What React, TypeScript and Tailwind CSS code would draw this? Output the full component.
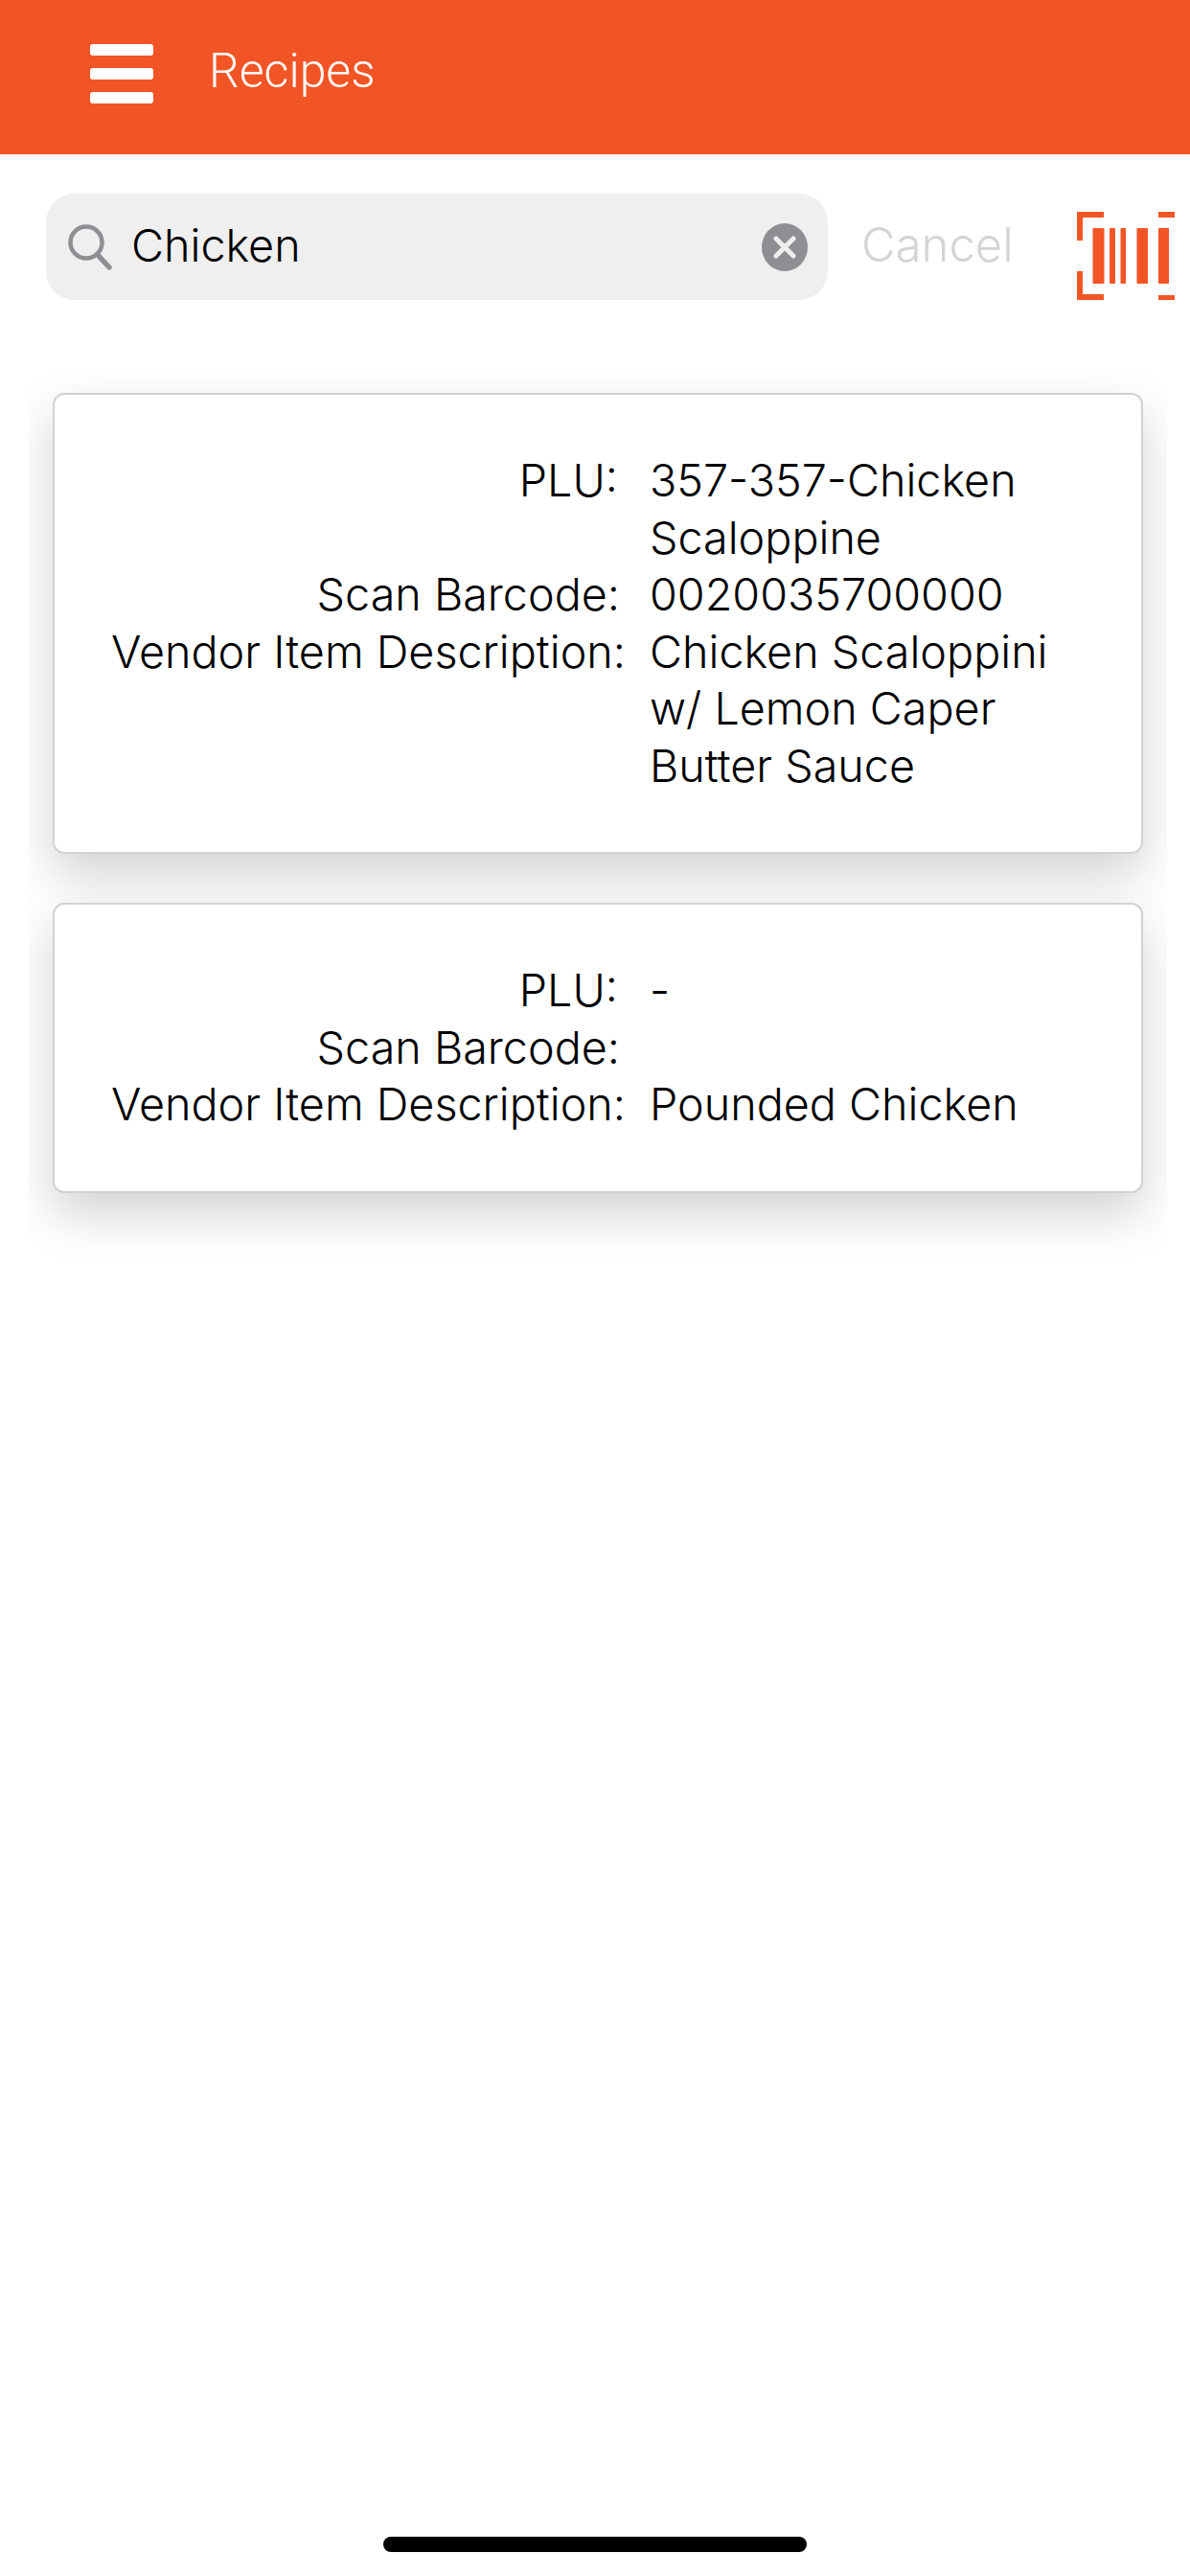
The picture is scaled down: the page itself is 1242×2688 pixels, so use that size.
const rows1 = [
  { label: "PLU:", pad: "pr-[8px]", value: "357-357-Chicken Scaloppine" },
  { label: "Scan Barcode:", pad: "pr-[6px]", value: "0020035700000" },
  { label: "Vendor Item Description:", pad: "pr-0", value: "Chicken Scaloppini w/ Lemon Caper Butter Sauce" },
];

const rows2 = [
  { label: "PLU:", pad: "pr-[8px]", value: "-" },
  { label: "Scan Barcode:", pad: "pr-[6px]", value: "" },
  { label: "Vendor Item Description:", pad: "pr-0", value: "Pounded Chicken" },
];

function BarcodeIcon() {
  return (
    <svg width="102" height="92" viewBox="0 0 102 92" fill="#f25525" className="shrink-0">
      <path d="M0 0h28v6H6v24H0zM0 62h6v24h22v6H0zM85 0h17v6H85zM85 87h17v5H85z" />
      <rect x="16.500" y="17" width="12" height="58" rx="1" />
      <rect x="34" y="17" width="6" height="58" rx="1" />
      <rect x="45.500" y="17" width="5.500" height="58" rx="1" />
      <rect x="62.500" y="17" width="11.500" height="58" rx="1" />
      <rect x="85" y="17" width="11" height="58" rx="1" />
    </svg>
  );
}

function ResultCard({ rows }: { rows: { label: string; pad: string; value: string }[] }) {
  return (
    <div className="rounded-[12px] border-2 border-[#d2d2d2] bg-white py-[60px] pl-[58px] pr-[80px] shadow-[0_22px_52px_rgba(0,0,0,0.18)]">
      <div className="grid grid-cols-[538px_1fr] gap-x-[25px] text-[46.700px] font-[360] leading-[59.5px] text-black">
        {rows.map((row) => (
          <div key={row.label} className="contents">
            <div className={`whitespace-nowrap text-right ${row.pad}`}>{row.label}</div>
            <div className="min-h-[59.5px]">{row.value}</div>
          </div>
        ))}
      </div>
    </div>
  );
}

export default function App() {
  return (
    <div className="flex h-[2688px] w-[1242px] flex-col bg-white font-['Inter',sans-serif]">
      <header className="flex h-[161px] items-start bg-[#f25525] pl-[94px]">
        <div className="mt-[46px] flex w-[66px] flex-col gap-[13px]">
          <div className="h-[12px] rounded-[3px] bg-white" />
          <div className="h-[12px] rounded-[3px] bg-white" />
          <div className="h-[12px] rounded-[3px] bg-white" />
        </div>
        <span className="ml-[58px] mt-[43px] font-['Roboto',sans-serif] text-[50px] font-light leading-[62px] text-white">Recipes</span>
      </header>

      <div className="mt-[41px] flex items-center pl-[48px]">
        <div className="flex h-[111px] w-[816px] items-center rounded-[30px] bg-[#efefef] pl-[23px] pr-[21px]">
          <svg width="46" height="48" viewBox="0 0 46 48" fill="none" stroke="#8e8e93" className="shrink-0">
            <circle cx="19" cy="19" r="16.500" strokeWidth="4.500" />
            <path d="M31 32l12 13" strokeWidth="5.500" strokeLinecap="round" />
          </svg>
          <span className="mb-[2px] ml-[20px] text-[46.700px] font-[360] text-black">Chicken</span>
          <svg width="48" height="50" viewBox="0 0 48 50" className="ml-auto shrink-0">
            <ellipse cx="24" cy="25" rx="24" ry="25" fill="#8e8e93" />
            <path d="M15 16l18 18M33 16L15 34" stroke="#efefef" strokeWidth="5" strokeLinecap="round" />
          </svg>
        </div>
        <span className="mb-[3px] ml-[35px] text-[49px] font-[360] text-[#d4d4d4]">Cancel</span>
        <div className="ml-auto mr-[16px] mt-[19px]">
          <BarcodeIcon />
        </div>
      </div>

      <div className="mx-[30px] mt-[72px] flex w-[1188px] flex-col gap-[51px] overflow-hidden px-[25px] pb-[71px] pt-[25px]">
        <ResultCard rows={rows1} />
        <ResultCard rows={rows2} />
      </div>

      <div className="mb-[25px] mt-auto h-[16px] w-[442px] self-center rounded-full bg-black" />
    </div>
  );
}
